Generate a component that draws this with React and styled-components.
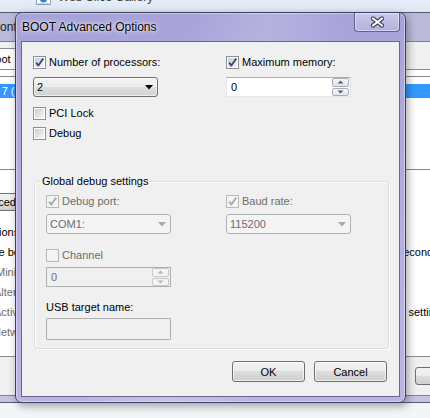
import React from "react"
import styled, { createGlobalStyle } from "styled-components"

const GlobalStyle = createGlobalStyle`
  html, body {
    margin: 0;
    padding: 0;
  }
  body {
    width: 430px;
    height: 418px;
    overflow: hidden;
    background: #f3f5f7;
    font-family: "Liberation Sans", Arial, sans-serif;
    font-size: 11px;
  }
`

const Desktop = styled.div`
  position: relative;
  width: 430px;
  height: 418px;
  overflow: hidden;
  background: #f3f5f7;
`

// IE favourites bar, only its lower edge peeks out
const FavBar = styled.div`
  height: 12px;
  background: linear-gradient(#e6eef8, #dde7f3);
  display: flex;
  align-items: flex-start;
  gap: 7px;
  padding-left: 36px;
  overflow: hidden;
  font-size: 12px;
  color: #3a3a3a;
`

const FavIcon = styled.svg`
  margin-top: -11px;
  flex: none;
`

const FavText = styled.span`
  margin-top: -10px;
  line-height: 14px;
`

/* ---------- window behind (msconfig) ---------- */

const BackWindow = styled.div`
  position: absolute;
  left: -130px;
  top: 12px;
  width: 600px;
  height: 391px;
  box-sizing: border-box;
  border: 1px solid #5b5a78;
  border-radius: 6px;
  background: linear-gradient(180deg, #bbb9d8 0%, #c6c4e2 100%);
  padding: 0 7px 6px;
  display: flex;
  flex-direction: column;
`

const BackTitle = styled.div`
  height: 28px;
  flex: none;
  display: flex;
  align-items: center;
  padding-left: 70px;
  font-size: 12px;
  color: #1e1e1e;
`

const BackBody = styled.div`
  flex: 1;
  background: #f0f0f0;
  border: 1px solid #807e9c;
  display: flex;
  flex-direction: column;
  color: #000;
`

const TabRow = styled.div`
  height: 27px;
  display: flex;
  align-items: flex-end;
  padding-left: 102px;
`

const Tab = styled.div`
  height: 21px;
  box-sizing: border-box;
  padding: 0 6px;
  display: flex;
  align-items: center;
  background: #fff;
  border: 1px solid #898c95;
  border-bottom: 0;
`

const TabPage = styled.div`
  height: 288px;
  box-sizing: border-box;
  background: #fff;
  border: 1px solid #898c95;
  padding: 6px 8px 0;
  display: flex;
  flex-direction: column;
`

const OsList = styled.div`
  height: 94px;
  box-sizing: border-box;
  border: 1px solid #828790;
  padding-top: 7px;
`

const OsRow = styled.div`
  height: 14px;
  line-height: 14px;
  padding-left: 65px;
  background: #3399ff;
  color: #fff;
  white-space: nowrap;
`

const BackButton = styled.div`
  height: 18px;
  box-sizing: border-box;
  margin: ${p => p.$top || 0}px 0 0 ${p => p.$left}px;
  width: ${p => p.$width}px;
  padding: 0 6px;
  display: flex;
  align-items: center;
  justify-content: ${p => (p.$center ? "center" : "flex-start")};
  border: 1px solid #707070;
  border-radius: 3px;
  background: linear-gradient(#f2f2f2 0%, #ebebeb 50%, #dddddd 50%, #cfcfcf 100%);
  white-space: nowrap;
`

const OptionList = styled.div`
  margin-top: 11px;
  display: flex;
  flex-direction: column;
`

const OptionRow = styled.div`
  height: 20px;
  display: grid;
  grid-template-columns: 440px 1fr;
  align-items: center;
  white-space: nowrap;
`

const OptionCell = styled.div`
  display: flex;
  align-items: center;
  gap: 3px;
  padding-left: ${p => p.$indent || 0}px;
  color: ${p => (p.$muted ? "#6d6d6d" : "#000")};
`

const Radio = styled.span`
  width: 13px;
  height: 13px;
  box-sizing: border-box;
  border-radius: ${p => (p.$square ? "0" : "50%")};
  border: 1px solid #8e8f8f;
  background: linear-gradient(135deg, #d0d3d8, #f7f7f7);
  flex: none;
`

const BackFooter = styled.div`
  flex: 1;
  padding-top: 10px;
`

/* ---------- BOOT Advanced Options dialog ---------- */

const Dialog = styled.div`
  position: absolute;
  left: 15px;
  top: 12px;
  width: 391px;
  height: 391px;
  box-sizing: border-box;
  border: 1px solid #3f3e5c;
  border-radius: 7px;
  background:
    linear-gradient(105deg, rgba(255, 255, 255, 0) 35%, rgba(255, 255, 255, 0.16) 52%, rgba(255, 255, 255, 0) 68%),
    linear-gradient(180deg, #a7a3d9 0%, #b1addf 45%, #bab6e4 100%);
  box-shadow: inset 0 0 0 1px rgba(255, 255, 255, 0.4), 2px 3px 8px rgba(0, 0, 0, 0.35);
  padding: 0 5px 5px;
  display: flex;
  flex-direction: column;
`

const TitleBar = styled.div`
  height: 28px;
  flex: none;
  display: flex;
  align-items: flex-start;
`

const Title = styled.div`
  align-self: center;
  padding-left: 1px;
  font-size: 12px;
  color: #000;
  text-shadow: 0 0 5px rgba(255, 255, 255, 0.95), 0 0 2px rgba(255, 255, 255, 0.8);
`

const CloseButton = styled.div`
  margin-left: auto;
  width: 46px;
  height: 19px;
  box-sizing: border-box;
  border: 1px solid rgba(55, 54, 92, 0.7);
  border-top: 0;
  border-radius: 0 0 4px 4px;
  background: linear-gradient(#cbc9ec, #b3b0de);
  box-shadow: inset 0 0 0 1px rgba(255, 255, 255, 0.45);
  display: flex;
  align-items: center;
  justify-content: center;
`

const Client = styled.div`
  flex: 1;
  background: #f0f0f0;
  border: 1px solid #68668a;
  padding: 14px 12px 0 11px;
  display: flex;
  flex-direction: column;
  font-family: "Liberation Sans", Arial, sans-serif;
  font-size: 11px;
  color: #000;
`

const TopGrid = styled.div`
  display: grid;
  grid-template-columns: 193px 1fr;
`

const Column = styled.div`
  display: flex;
  flex-direction: column;
`

const CheckRow = styled.label`
  height: 13px;
  line-height: 13px;
  display: flex;
  align-items: center;
  gap: 3px;
  margin-top: ${p => p.$top || 0}px;
  color: ${p => (p.$disabled ? "#6d6d6d" : "#000")};
  white-space: nowrap;
`

const Box = styled.span`
  width: 13px;
  height: 13px;
  box-sizing: border-box;
  flex: none;
  padding: 1px;
  border: 1px solid ${p => (p.$disabled ? "#b9b9b9" : "#8e8f8f")};
  background: ${p =>
    p.$disabled
      ? "#f4f4f4"
      : "linear-gradient(135deg, #c9cdd3, #f6f6f6) content-box, #fff"};
  display: flex;

  svg {
    margin: -1px;
    display: block;
  }
`

const Combo = styled.div`
  width: 125px;
  height: 20px;
  margin-top: ${p => p.$top || 0}px;
  box-sizing: border-box;
  border: 1px solid ${p => (p.$disabled ? "#adb2b5" : "#707070")};
  border-radius: 3px;
  background: ${p =>
    p.$disabled
      ? "#f4f4f4"
      : "linear-gradient(#f3f3f3 0%, #ececec 50%, #dedede 50%, #d2d2d2 100%)"};
  box-shadow: inset 0 0 0 1px rgba(255, 255, 255, ${p => (p.$disabled ? 0 : 0.6)});
  padding: 0 4px 0 3px;
  display: flex;
  align-items: center;
  justify-content: space-between;
  color: ${p => (p.$disabled ? "#6d6d6d" : "#000")};
`

const SpinBox = styled.div`
  width: 125px;
  height: 20px;
  margin-top: ${p => p.$top || 0}px;
  box-sizing: border-box;
  border: 1px solid;
  border-color: ${p =>
    p.$disabled ? "#afafaf" : "#abadb3 #dbdfe6 #e3e9ef #e2e3ea"};
  background: ${p => (p.$disabled ? "#f0f0f0" : "#fff")};
  display: flex;
  color: ${p => (p.$disabled ? "#6d6d6d" : "#000")};
`

const SpinValue = styled.div`
  flex: 1;
  display: flex;
  align-items: center;
  padding-left: 4px;
`

const SpinButtons = styled.div`
  width: 17px;
  display: flex;
  flex-direction: column;
  gap: 1px;
  padding: 0 1px 0 0;
`

const SpinButton = styled.div`
  flex: 1;
  box-sizing: border-box;
  border: 1px solid ${p => (p.$disabled ? "#c8c8c8" : "#a9aeb6")};
  border-radius: 2px;
  background: ${p => (p.$disabled ? "#f4f4f4" : "linear-gradient(#f6f7f9, #e2e5ea)")};
  display: flex;
  align-items: center;
  justify-content: center;
`

const TextField = styled.div`
  width: 125px;
  height: 22px;
  margin-top: ${p => p.$top || 0}px;
  box-sizing: border-box;
  border: 1px solid #afafaf;
  border-radius: 1px;
  background: #f0f0f0;
`

const Group = styled.fieldset`
  margin: 35px 0 0 1px;
  width: 355px;
  box-sizing: border-box;
  padding: 0 11px 8px;
  border: 1px solid #d5dfe5;
  border-radius: 3px;
  box-shadow: inset 1px 1px 0 #fff, 1px 1px 0 #fff;
  min-width: 0;
`

const Legend = styled.legend`
  padding: 0 2px;
  margin-left: -6px;
  line-height: 13px;
  color: #000;
`

const GroupGrid = styled.div`
  display: grid;
  grid-template-columns: 180px 1fr;
  margin-top: 7px;
`

const PlainLabel = styled.div`
  height: 13px;
  line-height: 13px;
  margin-top: ${p => p.$top || 0}px;
`

const ButtonRow = styled.div`
  margin-top: 12px;
  display: flex;
  justify-content: flex-end;
  gap: 9px;
`

const PushButton = styled.button`
  width: 73px;
  height: 21px;
  padding: 0;
  border: 1px solid #707070;
  border-radius: 3px;
  background: linear-gradient(#f2f2f2 0%, #ebebeb 50%, #dddddd 50%, #cfcfcf 100%);
  box-shadow: inset 0 0 0 1px rgba(255, 255, 255, 0.65);
  font-family: "Liberation Sans", Arial, sans-serif;
  font-size: 11px;
  color: #000;
`

const Check = ({ disabled }) => (
  <svg width="11" height="11" viewBox="0 0 11 11">
    <path
      d="M2.2 5.6 L4.4 8.6 L9.2 1.6"
      fill="none"
      stroke={disabled ? "#a8a8a8" : "#34467a"}
      strokeWidth="1.8"
      strokeLinejoin="round"
    />
  </svg>
)

function CheckBox({ checked, disabled, label, top }) {
  return (
    <CheckRow $disabled={disabled} $top={top}>
      <Box $disabled={disabled}>{checked && <Check disabled={disabled} />}</Box>
      {label}
    </CheckRow>
  )
}

const Arrow = ({ disabled }) => (
  <svg width="8" height="5" viewBox="0 0 8 5">
    <path d="M0 0 H8 L4 4.5 Z" fill={disabled ? "#a9a9a9" : "#000"} />
  </svg>
)

const SmallArrow = ({ up, disabled }) => (
  <svg width="7" height="4" viewBox="0 0 7 4">
    <path d={up ? "M0.5 3.5 H6.5 L3.5 0.5 Z" : "M0.5 0.5 H6.5 L3.5 3.5 Z"} fill={disabled ? "#b5b5b5" : "#4d6185"} />
  </svg>
)

function Spinner({ value, disabled, top }) {
  return (
    <SpinBox $disabled={disabled} $top={top}>
      <SpinValue>{value}</SpinValue>
      <SpinButtons>
        <SpinButton $disabled={disabled}>
          <SmallArrow up disabled={disabled} />
        </SpinButton>
        <SpinButton $disabled={disabled}>
          <SmallArrow disabled={disabled} />
        </SpinButton>
      </SpinButtons>
    </SpinBox>
  )
}

function Dropdown({ value, disabled, top }) {
  return (
    <Combo $disabled={disabled} $top={top}>
      <span>{value}</span>
      <Arrow disabled={disabled} />
    </Combo>
  )
}

function MsConfigWindow() {
  return (
    <BackWindow>
      <BackTitle>System Configuration</BackTitle>
      <BackBody>
        <TabRow>
          <Tab>Boot</Tab>
        </TabRow>
        <TabPage>
          <OsList>
            <OsRow>Windows 7 (C:\Windows) : Current OS; Default OS</OsRow>
          </OsList>
          <BackButton $top={23} $left={72} $width={110}>
            Advanced options...
          </BackButton>
          <OptionList>
            <OptionRow>
              <OptionCell $indent={70}>Boot options</OptionCell>
            </OptionRow>
            <OptionRow>
              <OptionCell $indent={78}>
                <Radio $square />
                Safe boot
              </OptionCell>
              <OptionCell $indent={9}>Timeout: 30 seconds</OptionCell>
            </OptionRow>
            <OptionRow>
              <OptionCell $indent={92} $muted>
                <Radio />
                Minimal
              </OptionCell>
            </OptionRow>
            <OptionRow>
              <OptionCell $indent={90} $muted>
                <Radio />
                Alternate shell
              </OptionCell>
            </OptionRow>
            <OptionRow>
              <OptionCell $indent={90} $muted>
                <Radio />
                Active Directory repair
              </OptionCell>
              <OptionCell $indent={12}>Make all boot settings permanent</OptionCell>
            </OptionRow>
            <OptionRow>
              <OptionCell $indent={89} $muted>
                <Radio />
                Network
              </OptionCell>
            </OptionRow>
          </OptionList>
        </TabPage>
        <BackFooter>
          <BackButton $left={536} $width={75} $center>
            OK
          </BackButton>
        </BackFooter>
      </BackBody>
    </BackWindow>
  )
}

export default function App() {
  return (
    <Desktop>
      <GlobalStyle />
      <FavBar>
        <FavIcon width="15" height="16" viewBox="0 0 15 16">
          <rect x="0.5" y="0.5" width="14" height="15" fill="#fff" stroke="#8a9bb3" />
          <circle cx="7.5" cy="10" r="3.5" fill="#2f7fd6" />
          <rect x="2" y="14" width="11" height="1" fill="#c7d3e3" />
        </FavIcon>
        <FavText>Web Slice Gallery</FavText>
      </FavBar>

      <MsConfigWindow />

      <Dialog>
        <TitleBar>
          <Title>BOOT Advanced Options</Title>
          <CloseButton>
            <svg width="15" height="12" viewBox="0 0 15 12">
              <path d="M3 2.5 L12 9.5 M12 2.5 L3 9.5" stroke="#3d3c58" strokeWidth="4.2" strokeLinecap="round" />
              <path d="M3 2.5 L12 9.5 M12 2.5 L3 9.5" stroke="#fff" strokeWidth="2.2" strokeLinecap="round" />
            </svg>
          </CloseButton>
        </TitleBar>

        <Client>
          <TopGrid>
            <Column>
              <CheckBox checked label="Number of processors:" />
              <Dropdown value="2" top={8} />
            </Column>
            <Column>
              <CheckBox checked label="Maximum memory:" />
              <Spinner value="0" top={8} />
            </Column>
          </TopGrid>

          <CheckBox label="PCI Lock" top={10} />
          <CheckBox label="Debug" top={7} />

          <Group>
            <Legend>Global debug settings</Legend>
            <GroupGrid>
              <Column>
                <CheckBox checked disabled label="Debug port:" />
                <Dropdown value="COM1:" disabled top={6} />
                <CheckBox disabled label="Channel" top={15} />
                <Spinner value="0" disabled top={5} />
                <PlainLabel $top={14}>USB target name:</PlainLabel>
                <TextField $top={4} />
              </Column>
              <Column>
                <CheckBox checked disabled label="Baud rate:" />
                <Dropdown value="115200" disabled top={6} />
              </Column>
            </GroupGrid>
          </Group>

          <ButtonRow>
            <PushButton>OK</PushButton>
            <PushButton>Cancel</PushButton>
          </ButtonRow>
        </Client>
      </Dialog>
    </Desktop>
  )
}
